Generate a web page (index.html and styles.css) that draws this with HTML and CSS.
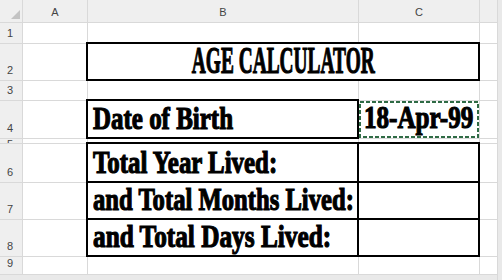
FILE: index.html
```html
<!DOCTYPE html>
<html>
<head>
<meta charset="utf-8">
<link rel="stylesheet" href="styles.css">
</head>
<body>
<div class="sheet">
  <div class="vstrip"></div>
  <div class="hstrip"></div>

  <div class="h corner"><span class="tri"></span></div>
  <div class="h col">A</div>
  <div class="h col">B</div>
  <div class="h col">C</div>
  <div class="h col"></div>

  <div class="h row">1</div>
  <div class="c"></div><div class="c"></div><div class="c"></div><div class="c"></div>

  <div class="h row">2</div>
  <div class="c"></div>
  <div class="c box span2 title"><span class="t t-title">AGE CALCULATOR</span></div>
  <div class="c"></div>

  <div class="h row">3</div>
  <div class="c"></div><div class="c"></div><div class="c"></div><div class="c"></div>

  <div class="h row">4</div>
  <div class="c"></div>
  <div class="c box lbl"><span class="t t-dob">Date of Birth</span></div>
  <div class="c val marq">
    <span class="t t-date">18-Apr-99</span>
    <svg class="ants" width="120" height="37" viewBox="0 0 120 37"><rect x="1" y="1" width="118" height="35" fill="none" stroke="#2f6b45" stroke-width="2" stroke-dasharray="4 2"/></svg>
  </div>
  <div class="c"></div>

  <div class="h row r5">5</div>
  <div class="c"></div><div class="c"></div><div class="c"></div><div class="c"></div>

  <div class="h row">6</div>
  <div class="c"></div>
  <div class="c box lbl"><span class="t t-year">Total Year Lived:</span></div>
  <div class="c box"></div>
  <div class="c"></div>

  <div class="h row">7</div>
  <div class="c"></div>
  <div class="c box lbl"><span class="t t-month">and Total Months Lived:</span></div>
  <div class="c box"></div>
  <div class="c"></div>

  <div class="h row">8</div>
  <div class="c"></div>
  <div class="c box lbl"><span class="t t-days">and Total Days Lived:</span></div>
  <div class="c box"></div>
  <div class="c"></div>

  <div class="h row r9">9</div>
  <div class="c"></div><div class="c"></div><div class="c"></div><div class="c"></div>
</div>
</body>
</html>
```

FILE: styles.css
```css
html, body {
  margin: 0;
  padding: 0;
  background: #ffffff;
  overflow: hidden;
}

.sheet {
  width: 502px;
  height: 280px;
  display: grid;
  grid-template-columns: 22px 64px 270px 120px 17px 4px;
  grid-template-rows: 22px 20px 36px 19px 37px 4px 38px 36px 36px 17px 5px;
  gap: 1px;
  background: #d9d9d9;
  font-family: "Liberation Sans", Arial, sans-serif;
}

.vstrip {
  grid-column: 6;
  grid-row: 1 / 12;
  background: #e9e9e9;
}

.hstrip {
  grid-column: 1 / 6;
  grid-row: 11;
  background: #e9e9e9;
}

.h {
  background: #efefef;
  color: #444444;
  font-size: 11px;
  line-height: 11px;
  display: flex;
  align-items: flex-end;
  overflow: hidden;
}

.col {
  justify-content: center;
  padding-bottom: 4px;
}

.row {
  padding-left: 7px;
  padding-bottom: 4px;
}

.r5 {
  align-items: flex-start;
  padding-bottom: 0;
}

.r9 {
  align-items: flex-start;
  padding-top: 1px;
  padding-bottom: 0;
}

.corner {
  justify-content: flex-end;
  padding: 0 2px 3px 0;
}

.tri {
  width: 0;
  height: 0;
  border-left: 9px solid transparent;
  border-bottom: 9px solid #c3c3c3;
}

.c {
  background: #ffffff;
}

.span2 {
  grid-column: span 2;
}

.box {
  margin: -2px -1px -1px -2px;
  border: 2px solid #000000;
}

.lbl {
  display: flex;
  align-items: flex-end;
  padding: 0 0 3px 5px;
  overflow: visible;
  white-space: nowrap;
}

.title {
  display: flex;
  align-items: flex-end;
  justify-content: center;
}

.val {
  position: relative;
  display: flex;
  align-items: flex-end;
  justify-content: center;
  padding-bottom: 5px;
}

.ants {
  position: absolute;
  left: 0;
  top: 0;
}

.t {
  display: inline-block;
  font-family: "Liberation Serif", "Times New Roman", serif;
  font-weight: bold;
  font-size: 32px;
  line-height: 32px;
  color: #000000;
  white-space: nowrap;
  -webkit-text-stroke: 1.2px #000000;
  transform-origin: left bottom;
}

.t-title {
  font-size: 38px;
  line-height: 38px;
  transform: scaleX(0.51);
  transform-origin: center bottom;
}

.t-dob {
  transform: scaleX(0.78);
}

.t-date {
  transform: scaleX(0.785);
  transform-origin: center bottom;
}

.t-year {
  transform: scaleX(0.777);
}

.t-month {
  transform: scaleX(0.77);
}

.t-days {
  transform: scaleX(0.79);
}
```
